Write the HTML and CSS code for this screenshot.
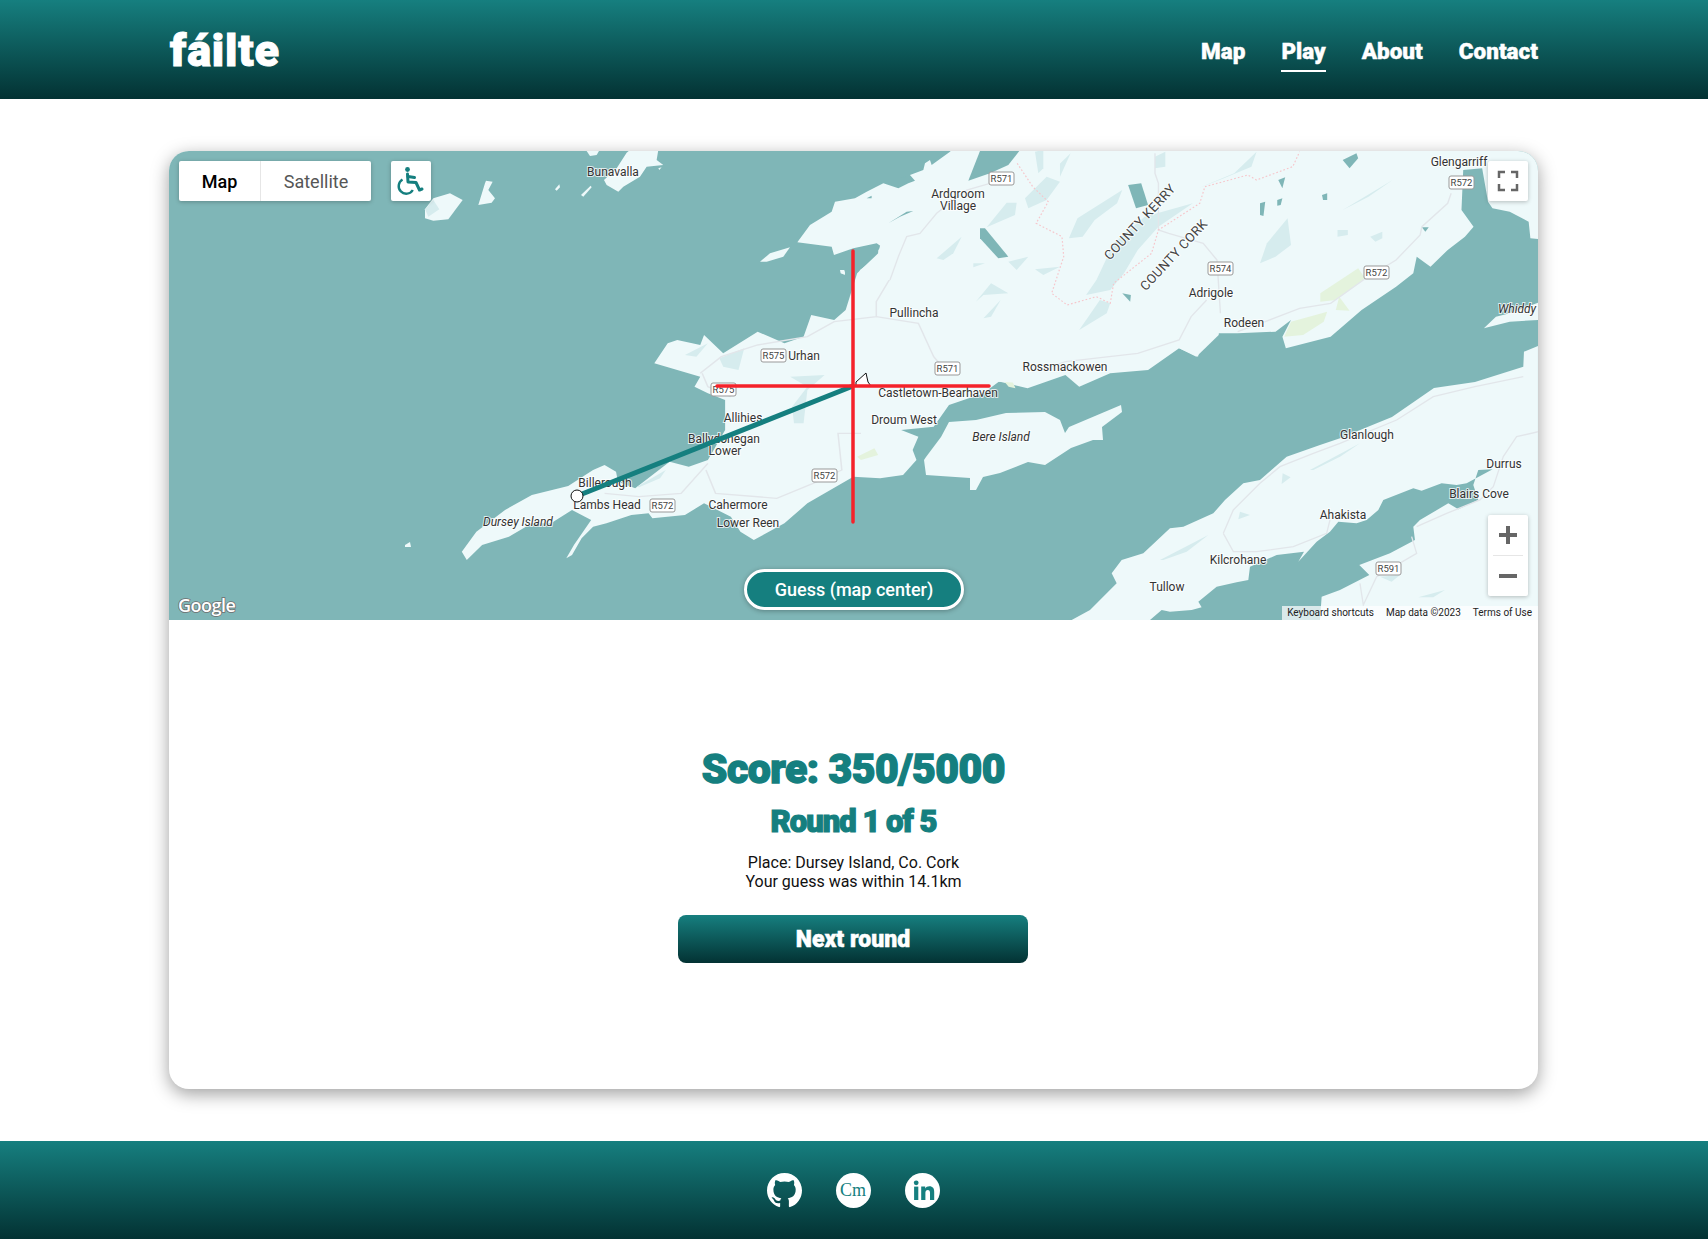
FILE: index.html
```html
<!DOCTYPE html>
<html lang="en">
<head>
<meta charset="utf-8">
<title>fáilte</title>
<link rel="stylesheet" href="styles.css">
</head>
<body>
<header class="site-header">
  <a class="logo" href="#">fáilte</a>
  <nav class="nav">
    <a class="nav-link" href="#">Map</a>
    <a class="nav-link nav-active" href="#">Play</a>
    <a class="nav-link" href="#">About</a>
    <a class="nav-link" href="#">Contact</a>
  </nav>
</header>
<main class="main">
  <section class="card">
    <div class="map">
      <svg class="map-svg" viewBox="169 151 1369 469" xmlns="http://www.w3.org/2000/svg">
        <rect class="water" x="169" y="151" width="1369" height="469"/>
        <g transform="translate(1000 140) scale(.3444 .3333)">
          <polygon class="land" points="-73,30 1568,30 1568,298 1540,295 1535,245 1480,215 1430,205 1417,185 1400,85 1345,90 1340,210 1375,260 1350,290 1300,330 1250,380 1210,350 1200,400 1150,440 1050,510 960,590 830,625 820,590 845,540 800,575 690,580 635,580 605,600 610,560 585,530 560,510 610,480 575,650 520,625 430,690 320,700 230,740 190,705 80,745 0,725 -300,725 -330,330"/>
          <polygon class="land" points="610,480 640,520 635,585 600,620 570,650 520,625 560,520"/>
          <polygon class="land" points="1405,565 1440,530 1480,520 1562,488 1568,540 1480,545"/>
          <g class="patch">
            <polygon points="70,190 135,110 205,40 170,120 135,180 100,205"/>
            <polygon points="200,295 225,235 355,150 340,190 275,240 240,290"/>
            <polygon points="280,420 330,310 420,230 560,190 460,260 400,330 360,400 320,450 250,465"/>
            <polygon points="575,145 680,100 745,35 730,80 650,115"/>
            <polygon points="755,370 775,310 835,235 845,315 800,350"/>
            <polygon points="995,210 1140,120 1070,170"/>
            <polygon points="980,270 1010,270 1010,285 980,290"/>
            <polygon points="230,570 290,480 320,490 310,520"/>
            <polygon points="450,50 480,35 480,80 450,85"/>
            <polygon points="105,40 130,35 125,100"/>
            <polygon points="1075,290 1110,275 1110,295 1090,305"/>
            <polygon points="0,220 50,190 40,225 0,255"/>
            <polygon points="30,370 80,350 70,385 30,395"/>
          </g>
          <g class="lake">
            <polygon points="372,135 410,130 430,195 395,205"/>
            <polygon points="995,60 1035,40 1040,55 1015,85"/>
            <polygon points="808,120 828,112 820,145"/>
            <polygon points="755,190 770,185 765,228 755,225"/>
            <polygon points="805,180 820,175 815,195 805,197"/>
            <polygon points="935,165 950,160 950,180 938,180"/>
            <polygon points="355,460 380,465 378,485"/>
            <polygon points="0,320 25,350 5,345"/>
            <polygon points="1225,262 1245,262 1235,275"/>
          </g>
          <g class="green">
            <polygon points="930,460 1040,385 1060,415 975,480 930,485"/>
            <polygon points="825,590 845,545 950,515 940,545 880,585"/>
            <polygon points="975,510 985,470 1015,512"/>
            <polygon points="5,715 30,710 45,745 25,740"/>
          </g>
          <polyline class="road" points="1310,160 1300,190 1225,260 1220,285 1150,360 1055,420 960,490 870,505 770,545 690,575"/>
          <polyline class="road" points="640,520 635,440 630,360 590,310 490,280 460,270 460,130 450,100 450,40"/>
          <polyline class="road" points="0,710 120,690 190,665 400,640 520,600 555,530 600,480"/>
        </g>
        <g transform="translate(440 230) scale(.3827 .3333)">
          <polygon class="land" points="1568,0 1568,462 1460,455 1420,490 1330,525 1290,590 1205,600 1250,620 1235,660 1245,690 1210,735 1150,745 1080,740 1020,780 960,820 900,880 820,930 785,905 760,860 690,820 640,855 555,865 545,850 500,855 435,880 400,890 370,925 345,975 330,985 350,945 395,870 345,840 290,880 240,880 180,920 110,945 70,990 57,965 95,905 170,840 240,795 335,768 400,720 430,705 460,725 465,755 510,775 600,695 650,710 700,690 745,600 745,510 700,490 665,470 680,440 560,400 595,340 620,330 680,345 690,315 740,370 830,305 900,340 950,320 970,255 1030,270 1060,240 1090,130 1145,70 1160,0"/>
          <polygon class="land" points="1050,120 1058,125 1058,135 1048,130"/>
          <g class="patch">
            <polygon points="730,385 795,355 780,420 740,410"/>
            <polygon points="640,375 700,340 670,380"/>
            <polygon points="925,580 920,530 960,470 915,440 1005,435 960,480 950,580"/>
            <polygon points="1295,90 1365,20 1340,80 1300,90"/>
            <polygon points="1400,215 1440,160 1485,190 1420,195"/>
            <polygon points="1420,265 1465,210 1440,260"/>
            <polygon points="515,770 590,720 575,745 520,772"/>
          </g>
          <polygon class="green" points="1090,680 1135,655 1145,675 1100,690"/>
          <polyline class="road" points="680,430 735,380 830,345 960,320 1030,275 1140,260 1140,215 1200,100 1215,25 1270,0"/>
          <polyline class="road" points="1140,260 1250,280 1290,380 1320,420"/>
          <polyline class="road" points="685,430 700,470 760,500"/>
          <polyline class="road" points="695,720 720,790 880,805 975,760 1050,720 1040,610 1100,610"/>
          <polyline class="road" points="430,790 520,800 630,790 700,700"/>
        </g>
        <g transform="translate(760 150) scale(.3333)">
          <polygon class="land" points="112,277 150,225 215,185 225,155 285,145 320,125 370,100 415,115 445,100 465,92 450,75 490,60 495,40 510,30 515,45 570,5 575,0 900,0 900,390 290,390 300,360 355,320 355,300 365,290 350,280 280,295 222,315 215,290"/>
          <polygon class="land" points="0,335 30,310 90,292 70,320 20,335"/>
          <polygon class="land" points="240,360 253,360 255,372 242,370"/>
          <g class="lake">
            <polygon points="660,3 625,92 690,70 745,45 778,3"/>
            <polygon points="385,220 440,185 460,183 420,200"/>
            <polygon points="320,145 335,137 335,145"/>
            <polygon points="420,82 438,76 435,84"/>
            <polygon points="660,235 675,235 745,320 715,325 660,265"/>
          </g>
          <g class="patch">
            <polygon points="680,232 740,158 770,158 765,195"/>
            <polygon points="530,325 605,260 580,310 550,330"/>
            <polygon points="795,145 860,80 900,95 860,150 805,175"/>
            <polygon points="825,5 850,0 850,55 835,70"/>
            <polygon points="745,335 805,320 770,360"/>
            <polygon points="640,340 675,340 640,352"/>
            <polygon points="825,358 900,350 850,375"/>
          </g>
          <polyline class="road" points="690,100 620,120 530,190 480,250 440,260 415,320 390,390"/>
        </g>
        <polygon class="land" points="926,457 941,437 949,422 976,420 1006,413 1045,412 1060,420 1065,433 1069,427 1121,405 1122,412 1102,427 1103,440 1093,440 1071,448 1045,465 1028,462 1000,473 983,477 976,490 970,490 970,478 926,475 924,460"/>
        <g transform="translate(1000 140) scale(.3444 .3333)">
          <polyline class="border" points="50,70 95,140 140,185 105,250 180,290 185,350 150,460 195,495 280,470 320,490 330,430 440,340 460,270 580,190 595,140 720,105 745,120 850,80 870,35"/>
        </g>
        <g transform="translate(1100 420) scale(.3333)">
          <polygon class="land" points="-85,600 -30,570 50,490 35,460 65,420 130,400 210,325 250,320 340,280 375,240 430,190 480,180 560,110 660,75 720,55 830,10 876,-9 1002,-96 1125,-114 1270,-160 1272,-205 1314,-222 1314,600"/>
          <polygon class="lake" points="150,600 185,570 210,575 275,570 305,562 295,545 350,500 410,487 445,480 450,440 530,405 612,395 595,425 650,365 690,335 715,305 770,310 800,300 835,270 850,240 940,205 965,212 1025,190 1070,195 1100,190 1178,148 1135,150 1120,195 1135,240 1075,268 1045,250 960,300 940,320 945,360 870,400 778,435 808,465 720,510 665,530 660,600"/>
          <g class="patch">
            <polygon points="630,150 780,70 720,110 640,150"/>
            <polygon points="180,420 325,345 260,395 190,420"/>
            <polygon points="545,192 572,172 548,160"/>
            <polygon points="415,298 450,285 420,275"/>
            <polygon points="955,532 1035,510 1000,532"/>
            <polygon points="840,470 900,465 875,485"/>
          </g>
          <polyline class="road" points="1315,35 1250,50 1210,110 1180,200 1140,240 1040,280 950,320"/>
          <polyline class="road" points="780,490 790,555 830,470 950,400 935,350"/>
          <polyline class="road" points="370,340 400,270 480,190 540,140 640,100 720,70 890,0 1000,-70 1125,-100 1270,-130"/>
          <polyline class="road" points="370,340 400,395 470,395 580,380 680,340 690,300"/>
        </g>
        <g transform="translate(400 150) scale(.3333)">
          <polygon class="land" points="75,178 100,145 150,130 188,150 145,208 100,212 75,205"/>
          <polygon class="patch" points="75,178 100,150 118,178 85,200"/>
          <polygon class="land" points="235,165 255,100 258,92 278,95 265,120 285,145 275,158"/>
          <polygon class="land" points="465,118 478,103 480,112 470,122"/>
          <polygon class="land" points="543,135 572,107 575,112 550,140"/>
          <polygon class="land" points="612,90 650,55 680,8 690,0 775,0 770,30 790,45 740,50 720,80 670,110 655,125 620,105"/>
          <polygon class="land" points="560,3 597,3 590,15 570,18"/>
          <polygon class="land" points="775,55 785,52 778,60"/>
        </g>
        <polygon class="land" points="405,545 410,542 411,547 405,547"/>

        <g class="shields">
          <g><rect x="989" y="172" width="25" height="13"/><text x="1001.5" y="182">R571</text></g>
          <g><rect x="1449" y="176" width="25" height="13"/><text x="1461.5" y="186">R572</text></g>
          <g><rect x="1208" y="262" width="25" height="13"/><text x="1220.5" y="272">R574</text></g>
          <g><rect x="1364" y="266" width="25" height="13"/><text x="1376.5" y="276">R572</text></g>
          <g><rect x="761" y="349" width="25" height="13"/><text x="773.5" y="359">R575</text></g>
          <g><rect x="711" y="383" width="25" height="13"/><text x="723.5" y="393">R575</text></g>
          <g><rect x="935" y="362" width="25" height="13"/><text x="947.5" y="372">R571</text></g>
          <g><rect x="812" y="469" width="25" height="13"/><text x="824.5" y="479">R572</text></g>
          <g><rect x="650" y="499" width="25" height="13"/><text x="662.5" y="509">R572</text></g>
          <g><rect x="1376" y="562" width="25" height="13"/><text x="1388.5" y="572">R591</text></g>
        </g>

        <g class="labels">
          <text x="613" y="176">Bunavalla</text>
          <text x="958" y="198">Ardgroom</text>
          <text x="958" y="210">Village</text>
          <text x="1459" y="166">Glengarriff</text>
          <text x="914" y="317">Pullincha</text>
          <text x="804" y="360">Urhan</text>
          <text x="1065" y="371">Rossmackowen</text>
          <text x="938" y="397">Castletown-Bearhaven</text>
          <text x="743" y="422">Allihies</text>
          <text x="724" y="443">Ballydonegan</text>
          <text x="725" y="455">Lower</text>
          <text x="904" y="424">Droum West</text>
          <text x="605" y="487">Billerough</text>
          <text x="607" y="509">Lambs Head</text>
          <text x="738" y="509">Cahermore</text>
          <text x="748" y="527">Lower Reen</text>
          <text x="1211" y="297">Adrigole</text>
          <text x="1244" y="327">Rodeen</text>
          <text x="1367" y="439">Glanlough</text>
          <text x="1504" y="468">Durrus</text>
          <text x="1479" y="498">Blairs Cove</text>
          <text x="1343" y="519">Ahakista</text>
          <text x="1238" y="564">Kilcrohane</text>
          <text x="1167" y="591">Tullow</text>
          <text class="italic" x="1001" y="441">Bere Island</text>
          <text class="italic" x="518" y="526">Dursey Island</text>
          <text class="italic" x="1517" y="313">Whiddy</text>
          <text class="county" transform="translate(1143 225) rotate(-47)">COUNTY KERRY</text>
          <text class="county" transform="translate(1177 258) rotate(-47)">COUNTY CORK</text>
        </g>

        <line class="guess-line" x1="853" y1="386" x2="577" y2="496"/>
        <path class="cursor" d="M856 382 L866 373 L868 382 L871 386 L856 386 Z"/>
        <line class="cross" x1="853" y1="251" x2="853" y2="522"/>
        <line class="cross" x1="717" y1="386" x2="989" y2="386"/>
        <circle class="marker" cx="577" cy="496" r="6"/>
        <text class="google" x="178" y="612">Google</text>
      </svg>

      <div class="map-type">
        <button class="map-type-btn map-type-on">Map</button>
        <button class="map-type-btn">Satellite</button>
      </div>
      <button class="ctrl ctrl-a11y" aria-label="Accessibility">
        <svg class="ctrl-icon" viewBox="0 0 40 40">
          <circle class="wc-fill" cx="16.5" cy="8.5" r="2.4"/>
          <path class="wc-bold" d="M16.5 13 L17 21 L25 21.5 L28.5 29 L31 28"/>
          <path class="wc-bold" d="M17 15.5 L23.5 16.5"/>
          <path class="wc-thin" d="M11.5 18.5 A7.6 7.6 0 1 0 21.8 29"/>
        </svg>
      </button>
      <button class="ctrl ctrl-full" aria-label="Fullscreen">
        <svg class="ctrl-icon" viewBox="0 0 40 40">
          <path class="ctrl-stroke" d="M11 17 V11 H17 M23 11 H29 V17 M29 23 V29 H23 M17 29 H11 V23"/>
        </svg>
      </button>
      <div class="ctrl-zoom">
        <button class="zoom-btn" aria-label="Zoom in">
          <svg class="ctrl-icon" viewBox="0 0 40 40"><path class="zoom-stroke" d="M11 20 H29 M20 11 V29"/></svg>
        </button>
        <span class="zoom-sep"></span>
        <button class="zoom-btn" aria-label="Zoom out">
          <svg class="ctrl-icon" viewBox="0 0 40 40"><path class="zoom-stroke" d="M11 20 H29"/></svg>
        </button>
      </div>
      <button class="guess-btn">Guess (map center)</button>
      <div class="attrib">
        <span>Keyboard shortcuts</span>
        <span>Map data ©2023</span>
        <span>Terms of Use</span>
      </div>
    </div>

    <div class="result">
      <h1 class="score">Score: 350/5000</h1>
      <h2 class="round">Round 1 of 5</h2>
      <p class="detail">Place: Dursey Island, Co. Cork<br>Your guess was within 14.1km</p>
      <button class="next-btn">Next round</button>
    </div>
  </section>
</main>
<footer class="site-footer">
  <a class="social" href="#" aria-label="GitHub">
    <svg class="social-svg" viewBox="0 0 16 16"><path class="social-fill" d="M8 0C3.58 0 0 3.58 0 8c0 3.54 2.29 6.53 5.47 7.59.4.07.55-.17.55-.38 0-.19-.01-.82-.01-1.49-2.01.37-2.53-.49-2.69-.94-.09-.23-.48-.94-.82-1.13-.28-.15-.68-.52-.01-.53.63-.01 1.08.58 1.23.82.72 1.21 1.87.87 2.33.66.07-.52.28-.87.51-1.07-1.78-.2-3.64-.89-3.64-3.95 0-.87.31-1.59.82-2.15-.08-.2-.36-1.02.08-2.12 0 0 .67-.21 2.2.82.64-.18 1.32-.27 2-.27.68 0 1.36.09 2 .27 1.53-1.04 2.2-.82 2.2-.82.44 1.1.16 1.92.08 2.12.51.56.82 1.27.82 2.15 0 3.07-1.87 3.75-3.65 3.95.29.25.54.73.54 1.48 0 1.07-.01 1.93-.01 2.2 0 .21.15.46.55.38A8.013 8.013 0 0016 8c0-4.42-3.58-8-8-8z"/></svg>
  </a>
  <a class="social social-cm" href="#">Cm</a>
  <a class="social" href="#" aria-label="LinkedIn">
    <svg class="social-svg" viewBox="0 0 35 35">
      <circle class="social-fill" cx="17.5" cy="17.5" r="17.5"/>
      <circle class="in-mark" cx="11.2" cy="9.8" r="2.4"/>
      <rect class="in-mark" x="9.1" y="13.6" width="4.2" height="13.4"/>
      <path class="in-mark" d="M16.2 13.6 H20.2 V15.5 C21 14.2 22.5 13.3 24.4 13.3 C27.8 13.3 29.2 15.5 29.2 18.9 V27 H25 V19.8 C25 18 24.4 16.9 22.8 16.9 C21.2 16.9 20.4 18 20.4 19.8 V27 H16.2 Z"/>
    </svg>
  </a>
</footer>
</body>
</html>
```

FILE: styles.css
```css
* { box-sizing: border-box; }
html, body { margin: 0; padding: 0; }
body {
  font-family: Roboto, "Liberation Sans", sans-serif;
  color: #111;
  background: #fff;
}
a { text-decoration: none; color: inherit; }
button { font-family: inherit; border: 0; cursor: pointer; display: block; }

.site-header {
  height: 99px;
  padding: 0 170px;
  display: flex;
  align-items: center;
  justify-content: space-between;
  background: linear-gradient(#167f7f, #033233);
  color: #fff;
}
.logo {
  font-family: Roboto, sans-serif;
  font-weight: 900;
  font-size: 45px;
  line-height: 1;
  margin-top: 2px;
  -webkit-text-stroke: 1px #fff;
  letter-spacing: .8px;
}
.nav { display: flex; gap: 36px; }
.nav-link {
  font-family: Roboto, sans-serif;
  font-weight: 900;
  font-size: 22.5px;
  line-height: 28px;
  padding: 10px 0 5px;
  border-bottom: 2px solid transparent;
  -webkit-text-stroke: .4px #fff;
}
.nav-active { border-bottom-color: #fff; }

.main { padding: 52px 170px 52px 169px; }
.card {
  height: 938px;
  border-radius: 20px;
  overflow: hidden;
  background: #fff;
  box-shadow: 0 5px 18px rgba(0, 0, 0, .38);
  display: flex;
  flex-direction: column;
}

.map { position: relative; height: 469px; flex: none; }
.map-svg { display: block; width: 100%; height: 100%; }
.water { fill: #7fb6b7; }
.land { fill: #eef9fa; }
.patch, .patch polygon { fill: #d6ecee; }
.lake, .lake polygon { fill: #7fb6b7; }
.green, .green polygon { fill: #e4f3dd; }
.road { fill: none; stroke: #e2e6ea; stroke-width: 4; }
.border { fill: none; stroke: #f6c7cc; stroke-width: 3.5; stroke-dasharray: 5 6; }

.labels text {
  font-family: Roboto, sans-serif;
  font-size: 12px;
  fill: #333;
  stroke: #fff;
  stroke-opacity: .75;
  stroke-width: 2px;
  paint-order: stroke;
  text-anchor: middle;
}
.labels .italic { font-style: italic; }
.labels .county { font-size: 13px; letter-spacing: .4px; fill: #444; }
.shields rect { fill: #fff; stroke: #999; stroke-width: 1; rx: 2px; }
.shields text {
  font-family: Roboto, sans-serif;
  font-size: 9.5px;
  fill: #444;
  text-anchor: middle;
}
.guess-line { stroke: #157f7f; stroke-width: 5; }
.cross { stroke: #f5222a; stroke-width: 3.5; stroke-linecap: round; }
.cursor { fill: #fff; stroke: #111; stroke-width: 1; }
.marker { fill: #fff; stroke: #111; stroke-width: 1; }
.google {
  font-family: "Open Sans", sans-serif;
  font-size: 18px;
  font-weight: 600;
  letter-spacing: -.5px;
  fill: #fff;
  stroke: #6d6d6d;
  stroke-width: 1.6px;
  paint-order: stroke;
}

.map-type {
  position: absolute;
  left: 10px;
  top: 10px;
  height: 40px;
  width: 192px;
  display: flex;
  background: #fff;
  border-radius: 2px;
  box-shadow: 0 1px 4px rgba(0, 0, 0, .25);
}
.map-type-btn {
  background: none;
  font-size: 18px;
  color: #565656;
  padding: 0;
  flex: 1 1 auto;
}
.map-type-on {
  flex: none;
  width: 82px;
  color: #000;
  font-weight: 500;
  border-right: 1px solid #e6e6e6;
}
.ctrl {
  position: absolute;
  top: 10px;
  width: 40px;
  height: 40px;
  padding: 0;
  background: #fff;
  border-radius: 2px;
  box-shadow: 0 1px 4px rgba(0, 0, 0, .25);
}
.ctrl-a11y { left: 222px; }
.ctrl-full { right: 10px; }
.ctrl-icon { display: block; width: 40px; height: 40px; }
.ctrl-stroke { fill: none; stroke: #666; stroke-width: 2.5; }
.wc-fill { fill: #157f7f; }
.wc-bold { fill: none; stroke: #157f7f; stroke-width: 3; stroke-linecap: round; stroke-linejoin: round; }
.wc-thin { fill: none; stroke: #157f7f; stroke-width: 2.4; }

.ctrl-zoom {
  position: absolute;
  right: 10px;
  top: 364px;
  width: 40px;
  height: 81px;
  display: flex;
  flex-direction: column;
  align-items: center;
  background: #fff;
  border-radius: 2px;
  box-shadow: 0 1px 4px rgba(0, 0, 0, .25);
}
.zoom-btn { width: 40px; height: 40px; padding: 0; background: none; flex: none; }
.zoom-sep { width: 30px; height: 1px; background: #e6e6e6; flex: none; }
.zoom-stroke { fill: none; stroke: #666; stroke-width: 4; }

.guess-btn {
  position: absolute;
  left: 575px;
  top: 418px;
  width: 220px;
  height: 41px;
  border: 3px solid #fff;
  border-radius: 21px;
  background: #157f7f;
  color: #fff;
  font-size: 18px;
  font-weight: 500;
  padding: 0;
  box-shadow: 0 1px 5px rgba(0, 0, 0, .3);
}
.attrib {
  position: absolute;
  right: 0;
  bottom: 0;
  height: 14px;
  display: flex;
  gap: 12px;
  padding: 0 6px 0 5px;
  font-size: 10px;
  line-height: 14px;
  color: #222;
  background: rgba(255, 255, 255, .7);
}

.result {
  flex: 1;
  display: flex;
  flex-direction: column;
  align-items: center;
  justify-content: center;
  padding-bottom: 2px;
}
.score, .round, .next-btn {
  font-family: Roboto, sans-serif;
  font-weight: 900;
}
.score {
  margin: 0;
  font-size: 41px;
  line-height: 48px;
  color: #157f7f;
  -webkit-text-stroke: 1.4px #157f7f;
  letter-spacing: -.5px;
}
.round {
  margin: 9px 0 0;
  font-size: 31px;
  line-height: 40px;
  color: #157f7f;
  -webkit-text-stroke: 1.2px #157f7f;
  letter-spacing: -1px;
}
.detail {
  margin: 11px 0 0;
  font-size: 16px;
  line-height: 19.5px;
  text-align: center;
  color: #111;
}
.next-btn {
  margin: 23px 1px 0 0;
  width: 350px;
  height: 48px;
  border-radius: 8px;
  background: linear-gradient(#167f7f, #033233);
  color: #fff;
  font-size: 23px;
  -webkit-text-stroke: .5px #fff;
  padding: 2px 0 0;
}

.site-footer {
  height: 98px;
  display: flex;
  align-items: center;
  justify-content: center;
  gap: 34px;
  padding-right: 2px;
  background: linear-gradient(#167f7f, #033233);
}
.social { width: 35px; height: 35px; display: block; flex: none; }
.social-svg { display: block; width: 35px; height: 35px; }
.social-fill { fill: #fff; }
.in-mark { fill: #157f7f; }
.social-cm {
  background: #fff;
  border-radius: 50%;
  color: #157f7f;
  font-family: "Liberation Serif", serif;
  font-size: 18px;
  line-height: 35px;
  text-align: center;
}
```
